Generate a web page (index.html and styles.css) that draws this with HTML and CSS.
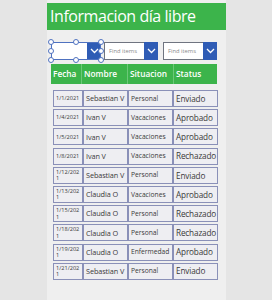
FILE: index.html
```html
<!DOCTYPE html>
<html>
<head>
<meta charset="utf-8">
<link rel="stylesheet" href="styles.css">
</head>
<body>
<div class="screen">
  <div class="title">Informacion día libre</div>
  <div class="filters">
    <div class="dd dd-first">
      <div class="dd-input"></div>
      <div class="dd-btn"><svg width="9" height="6" viewBox="0 0 9 6"><polyline points="1,1 4.5,4.5 8,1" fill="none" stroke="#fff" stroke-width="1.3"/></svg></div>
      <span class="h h1"></span><span class="h h2"></span><span class="h h3"></span>
      <span class="h h4"></span><span class="h h5"></span>
      <span class="h h6"></span><span class="h h7"></span><span class="h h8"></span>
    </div>
    <div class="dd dd-2">
      <div class="dd-input">Find items</div>
      <div class="dd-btn"><svg width="9" height="6" viewBox="0 0 9 6"><polyline points="1,1 4.5,4.5 8,1" fill="none" stroke="#fff" stroke-width="1.3"/></svg></div>
    </div>
    <div class="dd dd-3">
      <div class="dd-input">Find items</div>
      <div class="dd-btn"><svg width="9" height="6" viewBox="0 0 9 6"><polyline points="1,1 4.5,4.5 8,1" fill="none" stroke="#fff" stroke-width="1.3"/></svg></div>
    </div>
  </div>
  <div class="thead">
    <div class="th">Fecha</div>
    <div class="th">Nombre</div>
    <div class="th">Situacion</div>
    <div class="th">Status</div>
  </div>
  <div class="rows">
    <div class="row"><div class="c c-date">1/1/2021</div><div class="c c-name">Sebastian V</div><div class="c c-sit">Personal</div><div class="c c-st">Enviado</div></div>
    <div class="row"><div class="c c-date">1/4/2021</div><div class="c c-name">Ivan V</div><div class="c c-sit">Vacaciones</div><div class="c c-st">Aprobado</div></div>
    <div class="row"><div class="c c-date">1/5/2021</div><div class="c c-name">Ivan V</div><div class="c c-sit">Vacaciones</div><div class="c c-st">Aprobado</div></div>
    <div class="row"><div class="c c-date">1/8/2021</div><div class="c c-name">Ivan V</div><div class="c c-sit">Vacaciones</div><div class="c c-st">Rechazado</div></div>
    <div class="row"><div class="c c-date">1/12/2021</div><div class="c c-name">Sebastian V</div><div class="c c-sit">Personal</div><div class="c c-st">Enviado</div></div>
    <div class="row"><div class="c c-date">1/13/2021</div><div class="c c-name">Claudia O</div><div class="c c-sit">Vacaciones</div><div class="c c-st">Aprobado</div></div>
    <div class="row"><div class="c c-date">1/15/2021</div><div class="c c-name">Claudia O</div><div class="c c-sit">Personal</div><div class="c c-st">Rechazado</div></div>
    <div class="row"><div class="c c-date">1/18/2021</div><div class="c c-name">Claudia O</div><div class="c c-sit">Personal</div><div class="c c-st">Rechazado</div></div>
    <div class="row"><div class="c c-date">1/19/2021</div><div class="c c-name">Claudia O</div><div class="c c-sit">Enfermedad</div><div class="c c-st">Aprobado</div></div>
    <div class="row"><div class="c c-date">1/21/2021</div><div class="c c-name">Sebastian V</div><div class="c c-sit">Personal</div><div class="c c-st">Enviado</div></div>
  </div>
</div>
</body>
</html>
```
FILE: styles.css
```css
html, body {
  margin: 0;
  padding: 0;
}
body {
  background: #e5e5e5;
  font-family: "Open Sans", "DejaVu Sans", sans-serif;
  width: 272px;
  height: 300px;
  overflow: hidden;
}
.screen {
  margin-left: 47px;
  width: 179px;
  height: 300px;
  background: #efefef;
  padding-top: 3px;
  box-sizing: border-box;
}
.title {
  height: 27px;
  background: #3cb44b;
  color: #fff;
  font-size: 16px;
  letter-spacing: -0.45px;
  line-height: 27px;
  padding-left: 3px;
  white-space: nowrap;
  overflow: hidden;
}
.filters {
  display: flex;
  margin-top: 12px;
  padding-left: 4px;
  height: 18px;
}
.dd {
  position: relative;
  display: flex;
  height: 18px;
  box-sizing: border-box;
}
.dd-first {
  width: 50px;
  margin-right: 3px;
}
.dd-2 {
  width: 54px;
  margin-right: 5px;
}
.dd-3 {
  width: 54px;
}
.dd-input {
  flex: 1;
  background: #fff;
  border: 1px solid #6f7480;
  border-right: none;
  font-size: 5.8px;
  color: #8a8a8a;
  line-height: 16px;
  padding-left: 4px;
  white-space: nowrap;
  overflow: hidden;
}
.dd-first .dd-input {
  border-color: #fff;
}
.dd-btn {
  width: 14px;
  background: #2f5cb5;
  display: flex;
  align-items: center;
  justify-content: center;
}
.dd-first::after {
  content: "";
  position: absolute;
  left: 0;
  top: 0;
  right: 0;
  bottom: 0;
  border: 1px solid #4f72c0;
  pointer-events: none;
}
.h {
  position: absolute;
  z-index: 2;
  width: 4px;
  height: 4px;
  border-radius: 50%;
  background: #fff;
  border: 1px solid #4f72c0;
}
.h1 { left: -3px; top: -3px; }
.h2 { left: 22px; top: -3px; }
.h3 { right: -3px; top: -3px; }
.h4 { left: -3px; top: 6px; }
.h5 { right: -3px; top: 6px; }
.h6 { left: -3px; bottom: -3px; }
.h7 { left: 22px; bottom: -3px; }
.h8 { right: -3px; bottom: -3px; }
.thead {
  display: grid;
  grid-template-columns: 30px 46px 46px 44px;
  margin-top: 4px;
  margin-left: 4px;
  width: 166px;
  height: 20px;
  background: #3cb44b;
}
.th {
  color: #fff;
  font-size: 8.3px;
  font-weight: 600;
  line-height: 20px;
  padding-left: 2px;
  border-left: 1px solid #6cc878;
}
.th:first-child {
  border-left: none;
}
.rows {
  display: flex;
  flex-direction: column;
  gap: 2.2px;
  margin-top: 6px;
  margin-left: 6px;
}
.row {
  display: grid;
  grid-template-columns: 30px 45px 45px 45px;
  height: 17px;
}
.c {
  border: 1px solid #8a90b8;
  background: #eeeef2;
  color: #3a3a3a;
  display: flex;
  align-items: center;
  padding-left: 2px;
  box-sizing: border-box;
  overflow: hidden;
  line-height: 1.15;
  white-space: nowrap;
}
.c-date {
  font-size: 5.6px;
  white-space: normal;
  word-break: break-all;
  padding-right: 1px;
}
.c-name {
  font-size: 7.3px;
  letter-spacing: -0.1px;
}
.c-sit {
  font-size: 6.7px;
}
.c-st {
  font-size: 8.2px;
  letter-spacing: -0.15px;
}
```
